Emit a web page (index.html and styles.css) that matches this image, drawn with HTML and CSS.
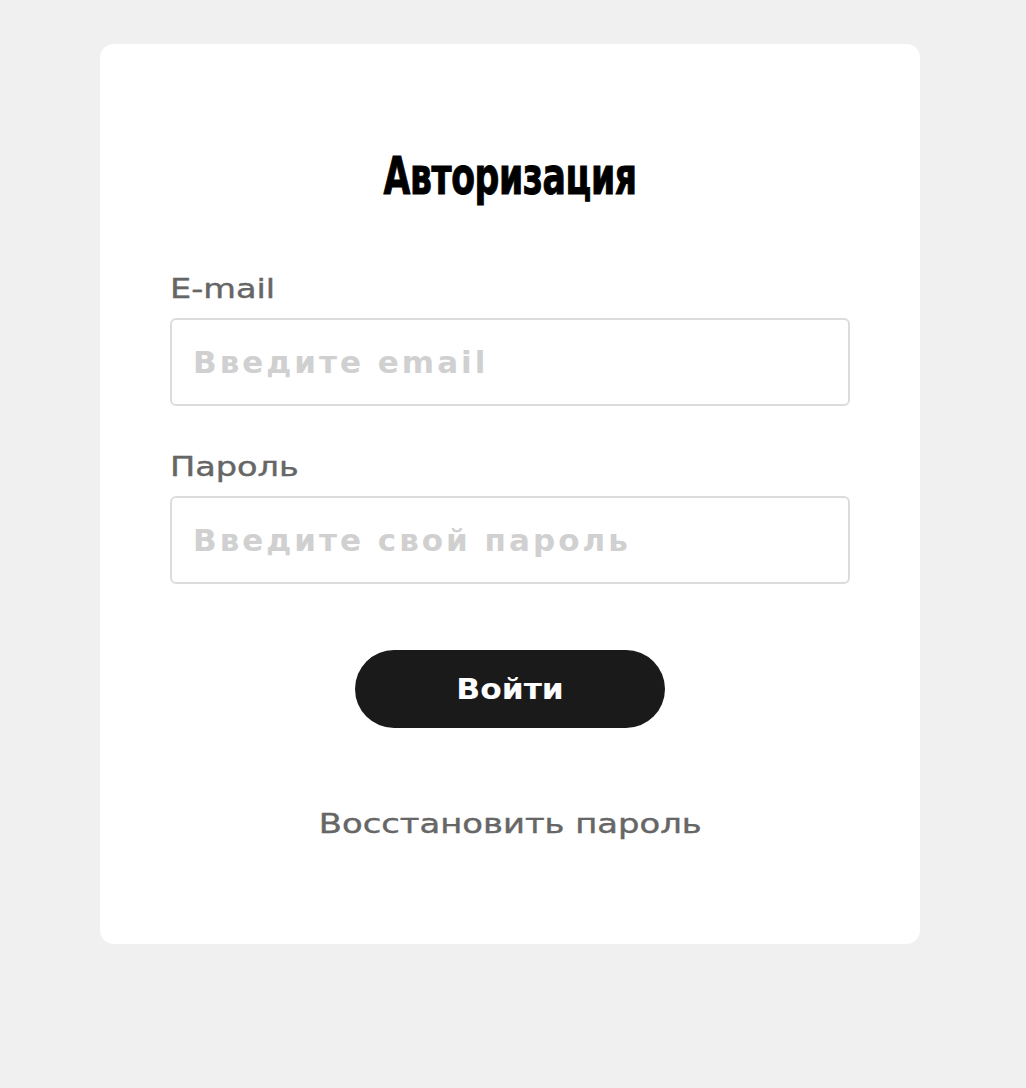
FILE: index.html
```html
<!DOCTYPE html>
<html lang="ru">
<head>
<meta charset="utf-8">
<title>Авторизация</title>
<link rel="stylesheet" href="styles.css">
</head>
<body>
<main class="card">
  <h1 class="title"><span class="title-text">Авторизация</span></h1>
  <form class="form">
    <label class="field">
      <span class="label">E-mail</span>
      <input class="input" type="email" placeholder="Введите email">
    </label>
    <label class="field field-second">
      <span class="label">Пароль</span>
      <input class="input" type="password" placeholder="Введите свой пароль">
    </label>
    <button class="submit" type="button"><span class="submit-text">Войти</span></button>
    <a class="restore" href="#">Восстановить пароль</a>
  </form>
</main>
</body>
</html>
```
FILE: styles.css
```css
* { box-sizing: border-box; }
html, body { margin: 0; padding: 0; }
body {
  background: #f0f0f0;
  font-family: "DejaVu Sans", "Noto Sans", sans-serif;
  min-height: 1088px;
}
.card {
  width: 820px;
  margin: 44px 0 0 100px;
  background: #fff;
  border-radius: 14px;
  padding: 102px 70px 105px;
}
.title {
  margin: 0;
  text-align: center;
  font-family: "DejaVu Sans Condensed", "DejaVu Sans", sans-serif;
  font-weight: 700;
  font-size: 52px;
  line-height: 60px;
  color: #000;
}
.title-text {
  display: inline-block;
  transform: scaleX(0.74);
  transform-origin: center;
  -webkit-text-stroke: 1px #000;
  letter-spacing: -0.5px;
}
.form {
  display: flex;
  flex-direction: column;
  margin-top: 68px;
}
.field {
  display: flex;
  flex-direction: column;
  gap: 14px;
}
.field-second { margin-top: 46px; }
.label {
  align-self: flex-start;
  display: inline-block;
  font-size: 26px;
  line-height: 30px;
  color: #666;
  transform: scaleX(1.29);
  transform-origin: left center;
  -webkit-text-stroke: 0.4px #666;
}
.input {
  height: 88px;
  width: 100%;
  border: 2px solid #dcdcdc;
  border-radius: 6px;
  padding: 0 21px;
  font-family: "DejaVu Sans", sans-serif;
  font-size: 31px;
  font-weight: 700;
  letter-spacing: 3px;
  color: #333;
  background: #fff;
  outline: none;
}
.input::placeholder { color: #d0d0d0; }
.submit {
  align-self: center;
  margin-top: 66px;
  width: 310px;
  height: 78px;
  border: 0;
  border-radius: 39px;
  background: #1a1a1a;
  color: #fff;
  font-family: "DejaVu Sans", sans-serif;
  font-weight: 700;
  font-size: 28px;
  cursor: pointer;
  padding: 0;
}
.submit-text {
  display: inline-block;
  transform: scaleX(1.12);
}
.restore {
  align-self: center;
  display: inline-block;
  margin-top: 81px;
  font-size: 26px;
  line-height: 30px;
  color: #666;
  text-decoration: none;
  transform: scaleX(1.3);
  -webkit-text-stroke: 0.4px #666;
}
```
